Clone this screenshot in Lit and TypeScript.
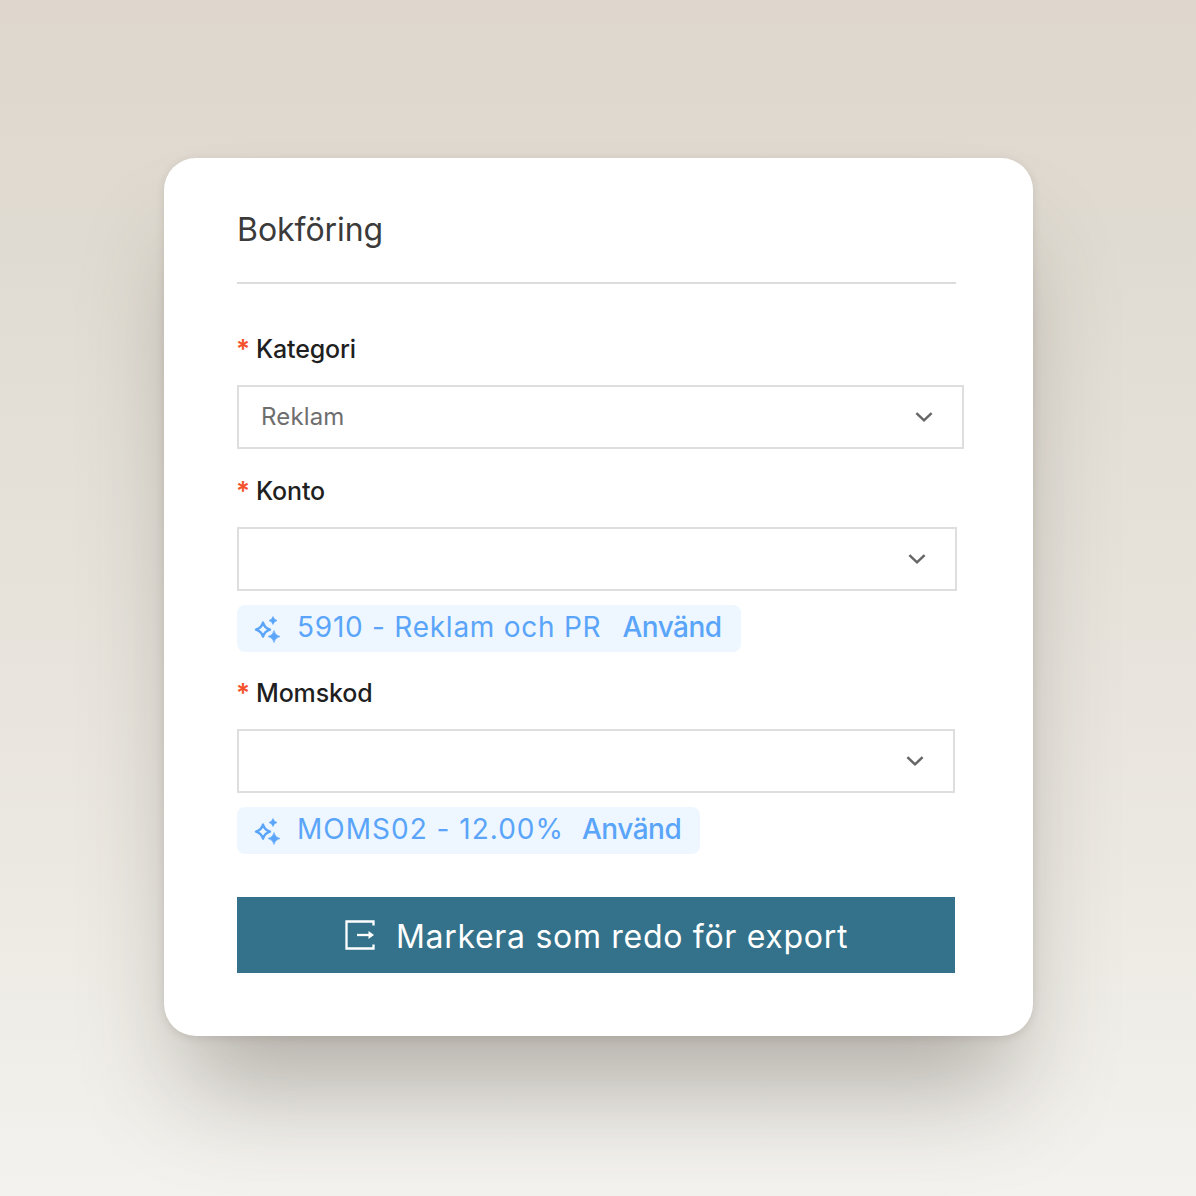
import { LitElement, html, css } from "lit";
import { customElement } from "lit/decorators.js";

const chevron = html`<svg class="chev" width="18" height="12" viewBox="0 0 18 12" fill="none"><path d="M1.4 2.2 9 9.4l7.6-7.2" stroke="#666" stroke-width="2.5"/></svg>`;
const sparkle = html`<svg class="spark" width="28" height="28" viewBox="0 0 28 28" fill="none">
  <path d="M10 7.6Q11.6 13 17 14.6 11.6 16.2 10 21.6 8.4 16.2 3 14.6 8.4 13 10 7.6Z" stroke="#5aa5fa" stroke-width="2.4" stroke-linejoin="round"/>
  <path d="M20 1.5Q20.8 4.7 24 5.5 20.8 6.3 20 9.5 19.2 6.3 16 5.5 19.2 4.7 20 1.5Z" fill="#5aa5fa" stroke="#5aa5fa" stroke-width="0.6"/>
  <path d="M21 15.5Q22 20.5 27 21.5 22 22.5 21 27.5 20 22.5 15 21.5 20 20.5 21 15.5Z" fill="#5aa5fa" stroke="#5aa5fa" stroke-width="0.6"/>
</svg>`;
const exportIcon = html`<svg width="32" height="32" viewBox="0 0 32 32" fill="none">
  <path d="M29.5 6.5V2.5H2.5V29.5H29.5V25.5" stroke="#fff" stroke-width="2.3"/>
  <path d="M13 16H26" stroke="#fff" stroke-width="2.3"/>
  <path d="M24.5 12 30 16 24.5 20Z" fill="#fff"/>
</svg>`;

@customElement("app-root")
export class AppRoot extends LitElement {
  static styles = css`
    :host {
      display: block;
      width: 1196px;
      height: 1196px;
      overflow: hidden;
      background: linear-gradient(180deg, #dfd7ce 0%, #e0dbd2 20%, #ebe8e1 70%, #f4f2ee 100%);
      font-family: "Inter", "Noto Sans", sans-serif;
      padding: 158px 0 0 164px;
      box-sizing: border-box;
    }
    .card {
      width: 869px;
      height: 878px;
      box-sizing: border-box;
      background: #fff;
      border-radius: 32px;
      padding: 51px 0 0 73px;
      box-shadow: 0 2px 8px rgba(70, 60, 45, 0.14), 0 72px 100px -22px rgba(70, 65, 55, 0.36);
      display: flex;
      flex-direction: column;
      align-items: flex-start;
    }
    h2 {
      margin: 0;
      font-size: 32px;
      line-height: 42px;
      font-weight: 400;
      color: #3b3b3b;
      letter-spacing: -0.05px;
    }
    .rule {
      width: 719px;
      height: 2px;
      background: #dcdcdc;
      margin-top: 31px;
    }
    .label {
      box-sizing: border-box;
      display: flex;
      align-items: center;
      height: 34px;
      padding-bottom: 2px;
      font-size: 25px;
      font-weight: 500;
      color: #1f1f1f;
      letter-spacing: -0.15px;
    }
    .label.first { margin-top: 49px; }
    .label.next { margin-top: 26px; }
    .label.tight { margin-top: 25px; }
    .star {
      color: #f4512c;
      width: 19px;
      font-size: 26px;
      font-weight: 600;
      position: relative;
      top: -1px;
      left: -1px;
    }
    .select {
      box-sizing: border-box;
      height: 64px;
      border: 2px solid #dedede;
      margin-top: 18px;
      display: flex;
      align-items: center;
      justify-content: space-between;
      padding: 0 29px 0 22px;
      font-size: 24px;
      letter-spacing: 0.15px;
      color: #6e6e6e;
      background: #fff;
    }
    .select span { padding-bottom: 2px; }
    .w1 { width: 727px; }
    .w2 { width: 720px; }
    .w3 { width: 718px; }
    .chip {
      box-sizing: border-box;
      height: 47px;
      margin-top: 14px;
      background: #eef7ff;
      border-radius: 8px;
      display: flex;
      align-items: center;
      padding: 0 19px 0 16px;
      color: #5aa5fa;
      font-size: 28px;
      letter-spacing: 0.75px;
    }
    .chip.wide { letter-spacing: 1px; }
    .chip span { padding-bottom: 4px; }
    .spark { margin-right: 16px; flex: none; }
    .chip .use { font-weight: 500; margin-left: 21px; letter-spacing: -0.5px; }
    .chip.wide .use { margin-left: 18px; }
    .btn {
      width: 718px;
      height: 76px;
      margin-top: 43px;
      background: #33728a;
      color: #fff;
      display: flex;
      align-items: center;
      justify-content: center;
      gap: 20px;
      font-size: 32px;
      letter-spacing: 0.7px;
    }
    .btn span { padding-top: 2px; }
  `;

  render() {
    return html`<div class="card">
      <h2>Bokföring</h2>
      <div class="rule"></div>
      <div class="label first"><span class="star">*</span>Kategori</div>
      <div class="select w1"><span>Reklam</span>${chevron}</div>
      <div class="label next"><span class="star">*</span>Konto</div>
      <div class="select w2"><span></span>${chevron}</div>
      <div class="chip">${sparkle}<span>5910 - Reklam och PR</span><span class="use">Använd</span></div>
      <div class="label tight"><span class="star">*</span>Momskod</div>
      <div class="select w3"><span></span>${chevron}</div>
      <div class="chip wide">${sparkle}<span>MOMS02 - 12.00%</span><span class="use">Använd</span></div>
      <div class="btn">${exportIcon}<span>Markera som redo för export</span></div>
    </div>`;
  }
}
